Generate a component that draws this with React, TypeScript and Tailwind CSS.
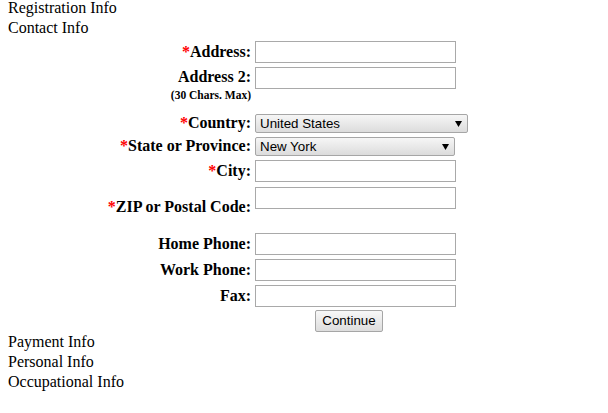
import type { ReactNode } from 'react'

const sans = "font-['Liberation_Sans',Arial,sans-serif]"

function Label({ req, children, className = '' }: { req?: boolean; children: ReactNode; className?: string }) {
  return (
    <div className={`w-[243px] shrink-0 text-right font-bold leading-[18px] ${className}`}>
      {req && <span className="text-[#ff0000]">*</span>}
      {children}
    </div>
  )
}

function TextBox({ className = 'w-[201px]' }: { className?: string }) {
  return (
    <input
      type="text"
      className={`h-[22px] shrink-0 border border-[#a9a9a9] bg-white px-[2px] text-[13.33px] outline-none ${sans} ${className}`}
    />
  )
}

function Dropdown({ value, className }: { value: string; className: string }) {
  return (
    <div
      className={`flex h-[19px] shrink-0 items-center justify-between rounded-[2px] border border-[#a6a6a6] bg-gradient-to-b from-[#f6f6f6] to-[#dcdcdc] pl-[4px] pr-[5px] text-[13.33px] leading-[15px] text-black ${sans} ${className}`}
    >
      <span>{value}</span>
      <svg width="7" height="6" viewBox="0 0 7 6">
        <path d="M0 0h7L3.5 6z" fill="#000" />
      </svg>
    </div>
  )
}

export default function App() {
  return (
    <div className="min-h-[413px] bg-white pl-2 font-['Liberation_Serif','Times_New_Roman',serif] text-[16px] text-black">
      <div className="h-5 leading-4">Registration Info</div>
      <div className="h-5 leading-4">Contact Info</div>

      {/* Contact form */}
      <div className="flex flex-col">
        <div className="mt-[1px] flex h-[22px] items-center gap-[4px]">
          <Label req className="pb-[1px]">Address:</Label>
          <TextBox />
        </div>

        <div className="mt-[4px] flex items-start gap-[4px]">
          <Label className="pt-[1px]">
            Address 2:
            <div className="mt-[3px] text-[11.5px] leading-[12px]">(30 Chars. Max)</div>
          </Label>
          <TextBox />
        </div>

        <div className="mt-[13px] flex h-[19px] items-center gap-[4px]">
          <Label req className="pb-[1px]">Country:</Label>
          <Dropdown value="United States" className="w-[213px]" />
        </div>

        <div className="mt-[4px] flex h-[19px] items-center gap-[4px]">
          <Label req className="pb-[1px]">State or Province:</Label>
          <Dropdown value="New York" className="w-[200px]" />
        </div>

        <div className="mt-[4px] flex h-[22px] items-center gap-[4px]">
          <Label req className="pb-[1px]">City:</Label>
          <TextBox />
        </div>

        <div className="mt-[5px] flex items-start gap-[4px]">
          <Label req className="pt-[11px]">ZIP or Postal Code:</Label>
          <TextBox />
        </div>

        <div className="mt-[17px] flex h-[22px] items-center gap-[4px]">
          <Label className="pb-[1px]">Home Phone:</Label>
          <TextBox />
        </div>

        <div className="mt-[4px] flex h-[22px] items-center gap-[4px]">
          <Label className="pb-[1px]">Work Phone:</Label>
          <TextBox />
        </div>

        <div className="mt-[4px] flex h-[22px] items-center gap-[4px]">
          <Label className="pb-[1px]">Fax:</Label>
          <TextBox />
        </div>

        <div className="mt-[3px] flex h-[22px] gap-[4px]">
          <div className="w-[243px] shrink-0" />
          <button
            className={`ml-[60px] h-[22px] w-[68px] rounded-[2px] border border-[#a6a6a6] bg-gradient-to-b from-[#f8f8f8] to-[#dddddd] text-[13.33px] text-black ${sans}`}
          >
            Continue
          </button>
        </div>
      </div>

      <div className="mt-[2px] h-5 leading-4">Payment Info</div>
      <div className="h-5 leading-4">Personal Info</div>
      <div className="h-5 leading-4">Occupational Info</div>
    </div>
  )
}
